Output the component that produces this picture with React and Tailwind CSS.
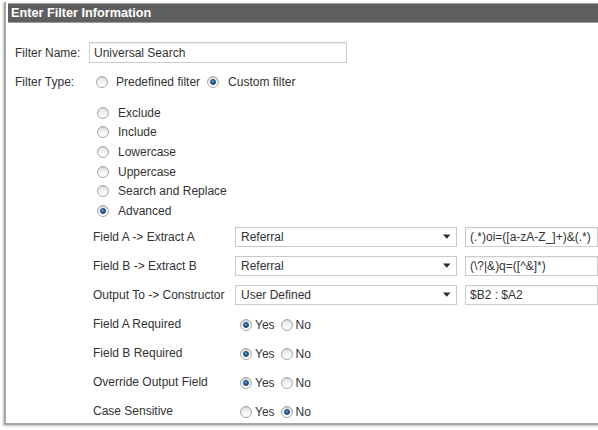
import React from "react";

function Radio({ checked }) {
  return (
    <span className="relative inline-block w-[12px] h-[12px] rounded-full border border-[#a9a9a9] bg-[linear-gradient(180deg,#e4e4e4_0%,#f6f6f6_60%,#ffffff_100%)] shadow-[inset_0_1px_1px_rgba(0,0,0,0.12)] shrink-0">
      {checked && (
        <span className="absolute left-[2px] top-[2px] w-[6px] h-[6px] rounded-full bg-[radial-gradient(circle_at_40%_35%,#5fa3e0_0%,#1c5e9c_60%,#143f6b_100%)] border border-[#1a3f66]" />
      )}
    </span>
  );
}

function Select({ value }) {
  return (
    <div className="w-[222px] h-[20px] border border-[#c9c9c9] bg-white flex items-center justify-between pl-[5px] pr-[5px] shrink-0">
      <span>{value}</span>
      <svg width="8" height="5" viewBox="0 0 8 5">
        <path d="M0 0.5 H7.5 L3.75 4.8 Z" fill="#2b2b2b" />
      </svg>
    </div>
  );
}

function TextBox({ value, w }) {
  return (
    <div
      className={`h-[20px] border border-[#cccccc] bg-white flex items-center pl-[4px] shrink-0 shadow-[inset_0_1px_1px_rgba(0,0,0,0.06)] ${w}`}
    >
      <span className="whitespace-nowrap">{value}</span>
    </div>
  );
}

function FieldRow({ label, sel, txt }) {
  return (
    <div className="flex items-center h-[29px] pl-[87px]">
      <div className="w-[142px] shrink-0">{label}</div>
      <Select value={sel} />
      <div className="ml-[8px]">
        <TextBox value={txt} w="w-[133px]" />
      </div>
    </div>
  );
}

function YesNoRow({ label, yes }) {
  return (
    <div className="flex items-center h-[29px] pl-[87px]">
      <div className="w-[147px] shrink-0">{label}</div>
      <div className="flex items-center mt-[2px]">
        <Radio checked={yes} />
        <span className="ml-[3px]">Yes</span>
        <span className="ml-[6px] flex items-center">
          <Radio checked={!yes} />
        </span>
        <span className="ml-[3px]">No</span>
      </div>
    </div>
  );
}

export default function App() {
  const options = [
    ["Exclude", false],
    ["Include", false],
    ["Lowercase", false],
    ["Uppercase", false],
    ["Search and Replace", false],
    ["Advanced", true],
  ];
  return (
    <div className="w-[598px] h-[430px] overflow-hidden bg-white text-[12px] text-[#333333] font-['Liberation_Sans',Arial,sans-serif]">
      <div className="ml-[4px] mt-[2px] w-[600px] h-[423px] border-l-2 border-b-2 border-[#a6a6a6] shadow-[-1px_1px_2px_rgba(0,0,0,0.25)] pt-[1px]">
        <div className="ml-[2px] h-[20px] bg-[#5f5f5f] border-t border-b border-[#9c9c9c] flex items-center pl-[3px]">
          <span className="text-white font-bold text-[12.7px] leading-none">Enter Filter Information</span>
        </div>

        <div className="flex items-center h-[21px] mt-[19px] pl-[9px]">
          <div className="w-[74px] shrink-0">Filter Name:</div>
          <TextBox value="Universal Search" w="w-[258px] h-[21px]" />
        </div>

        <div className="flex items-center h-[20px] mt-[9px] pl-[9px]">
          <div className="w-[81px] shrink-0">Filter Type:</div>
          <Radio checked={false} />
          <span className="ml-[8px]">Predefined filter</span>
          <span className="ml-[7px] flex items-center">
            <Radio checked={true} />
          </span>
          <span className="ml-[9px]">Custom filter</span>
        </div>

        <div className="mt-[11px] pl-[91px]">
          {options.map(([l, c]) => (
            <div key={l} className="flex items-center h-[19.6px]">
              <Radio checked={c} />
              <span className="ml-[9px]">{l}</span>
            </div>
          ))}
        </div>

        <div className="mt-[1.5px]">
          <FieldRow label="Field A -> Extract A" sel="Referral" txt="(.*)oi=([a-zA-Z_]+)&(.*)" />
          <FieldRow label="Field B -> Extract B" sel="Referral" txt="(\?|&)q=([^&]*)" />
          <FieldRow label="Output To -> Constructor" sel="User Defined" txt="$B2 : $A2" />
          <YesNoRow label="Field A Required" yes={true} />
          <YesNoRow label="Field B Required" yes={true} />
          <YesNoRow label="Override Output Field" yes={true} />
          <YesNoRow label="Case Sensitive" yes={false} />
        </div>
      </div>
    </div>
  );
}
